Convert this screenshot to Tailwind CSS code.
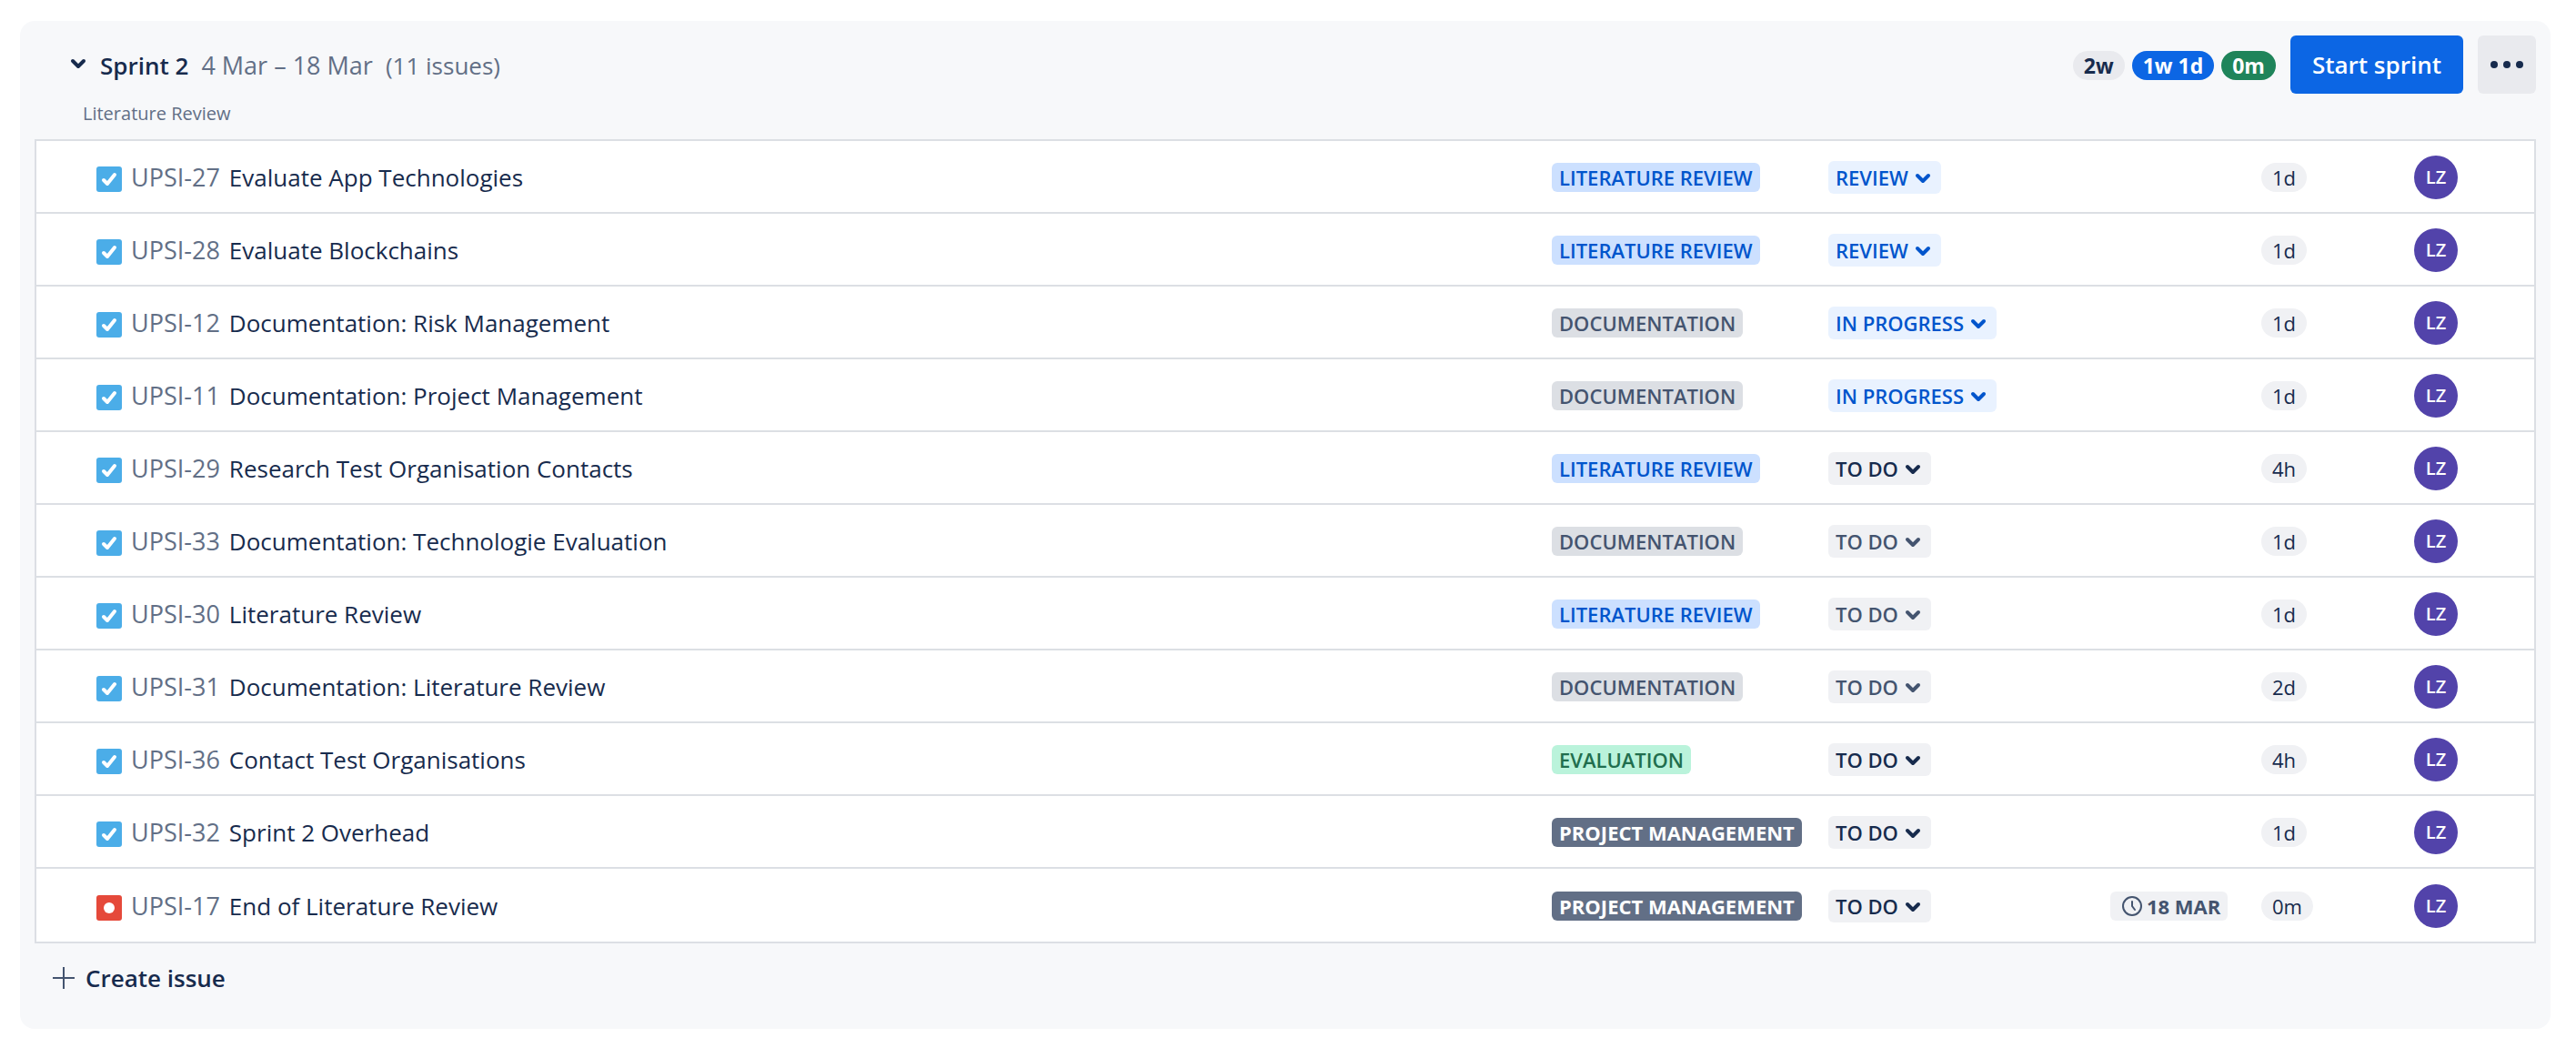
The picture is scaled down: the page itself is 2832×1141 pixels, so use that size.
<!DOCTYPE html>
<html lang="en">
<head>
<meta charset="utf-8">
<title>Backlog</title>
<script src="https://cdn.jsdelivr.net/npm/@tailwindcss/browser@4"></script>
</head>
<body class="bg-white pt-[23px] pr-7 pl-[22px] font-['Open_Sans','Noto_Sans',sans-serif] text-[26px] text-[#172b4d]">
<section class="rounded-2xl bg-[#f7f8fa] px-4 pt-4 pb-9">
  <header class="flex h-[114px] items-start">
    <div class="flex-1 pl-8">
      <div class="flex h-[66px] items-center">
        <button type="button" aria-label="Collapse sprint" class="flex size-8 items-center justify-center">
          <svg class="mb-1 size-5" viewBox="0 0 20 20" fill="none" stroke="currentColor" stroke-width="4" stroke-linecap="round" stroke-linejoin="round"><path d="M4 7l6 6 6-6"/></svg>
        </button>
        <h2 class="ml-2 font-semibold">Sprint 2</h2>
        <span class="ml-3.5 text-[27px] text-[#626f86]">4 Mar – 18 Mar</span>
        <span class="ml-3.5 text-[26px] text-[#626f86]">(11 issues)</span>
      </div>
      <p class="pl-[21px] text-[20px] leading-10 text-[#626f86]">Literature Review</p>
    </div>
    <div class="flex h-[66px] items-center gap-2 text-[23px] leading-8 font-bold">
      <span class="rounded-full bg-[#e9eaee] px-3">2w</span>
      <span class="rounded-full bg-[#0c66e4] px-3 text-white">1w 1d</span>
      <span class="rounded-full bg-[#1f845a] px-3 text-white">0m</span>
    </div>
    <button type="button" class="ml-4 h-16 rounded-md bg-[#0c66e4] px-6 font-semibold text-white">Start sprint</button>
    <button type="button" aria-label="More actions" class="ml-4 flex size-16 items-center justify-center rounded-md bg-[#e9eaee]">
      <svg class="h-3 w-9" viewBox="0 0 36 12" fill="currentColor"><circle cx="4" cy="6" r="4"/><circle cx="18" cy="6" r="4"/><circle cx="32" cy="6" r="4"/></svg>
    </button>
  </header>
  <div class="border-2 border-[#dcdfe4] bg-white">
    <table class="w-full table-fixed border-separate border-spacing-0">
      <colgroup><col><col class="w-[304px]"><col class="w-[310px]"><col class="w-[166px]"><col class="w-[168px]"><col class="w-[132px]"></colgroup>
      <tbody id="issues"></tbody>
    </table>
  </div>
  <button type="button" class="mt-4.5 ml-5 flex h-10 items-center gap-3 font-semibold">
    <svg class="size-6 text-[#44546f]" viewBox="0 0 24 24" stroke="currentColor" stroke-width="2"><path d="M12 0v24M0 12h24"/></svg>
    Create issue
  </button>
</section>
<script>
const epics = {
  'LITERATURE REVIEW': 'bg-[#cce0ff] text-[#0055cc] font-semibold',
  'DOCUMENTATION': 'bg-[#dcdfe4] text-[#44546f] font-semibold',
  'EVALUATION': 'bg-[#baf3db] text-[#216e4e] font-semibold',
  'PROJECT MANAGEMENT': 'bg-[#626f86] text-white font-bold'
};
const tones = {
  blue: 'bg-[#e9f2ff] text-[#0055cc]',
  dark: 'bg-[#f0f1f4] text-[#172b4d]',
  gray: 'bg-[#f0f1f4] text-[#44546f]'
};
const issues = [
  ['UPSI-27', 'Evaluate App Technologies', 'LITERATURE REVIEW', 'REVIEW', 'blue', '', '1d'],
  ['UPSI-28', 'Evaluate Blockchains', 'LITERATURE REVIEW', 'REVIEW', 'blue', '', '1d'],
  ['UPSI-12', 'Documentation: Risk Management', 'DOCUMENTATION', 'IN PROGRESS', 'blue', '', '1d'],
  ['UPSI-11', 'Documentation: Project Management', 'DOCUMENTATION', 'IN PROGRESS', 'blue', '', '1d'],
  ['UPSI-29', 'Research Test Organisation Contacts', 'LITERATURE REVIEW', 'TO DO', 'dark', '', '4h'],
  ['UPSI-33', 'Documentation: Technologie Evaluation', 'DOCUMENTATION', 'TO DO', 'gray', '', '1d'],
  ['UPSI-30', 'Literature Review', 'LITERATURE REVIEW', 'TO DO', 'gray', '', '1d'],
  ['UPSI-31', 'Documentation: Literature Review', 'DOCUMENTATION', 'TO DO', 'gray', '', '2d'],
  ['UPSI-36', 'Contact Test Organisations', 'EVALUATION', 'TO DO', 'dark', '', '4h'],
  ['UPSI-32', 'Sprint 2 Overhead', 'PROJECT MANAGEMENT', 'TO DO', 'dark', '', '1d'],
  ['UPSI-17', 'End of Literature Review', 'PROJECT MANAGEMENT', 'TO DO', 'dark', '18 MAR', '0m']
];
const task = '<svg class="mt-1 size-7 shrink-0" viewBox="0 0 28 28"><rect width="28" height="28" rx="3" fill="#4bade8"/><path d="M8 15l4 4L20 9" fill="none" stroke="#fff" stroke-width="4" stroke-linecap="round" stroke-linejoin="round"/></svg>';
const risk = '<svg class="mt-1 size-7 shrink-0" viewBox="0 0 28 28"><rect width="28" height="28" rx="3" fill="#e5493a"/><circle cx="14" cy="14" r="6" fill="#fff"/></svg>';
const clock = '<svg class="size-6" viewBox="0 0 24 24" fill="none" stroke="currentColor" stroke-width="2" stroke-linecap="round"><circle cx="12" cy="12" r="10"/><path d="M12 7v5l3 4"/></svg>';
const cell = 'border-b-2 border-[#dcdfe4] p-0 pt-0.5 group-last:border-b-0';
document.getElementById('issues').innerHTML = issues.map(([key, title, epic, status, tone, due, estimate]) => `
  <tr class="group">
    <td class="h-20 ${cell} pl-[66px]"><div class="flex items-center">
      ${due ? risk : task}<a href="#${key}" class="ml-2.5 text-[27px] text-[#626f86]">${key}</a><span class="ml-2.5">${title}</span></div></td>
    <td class="${cell}"><div class="flex"><span class="rounded-md px-2 text-[22px] leading-8 ${epics[epic]}">${epic}</span></div></td>
    <td class="${cell}"><div class="flex"><span class="relative rounded-md ${tones[tone]}">
      <select aria-label="Status of ${key}" class="block h-9 appearance-none pr-9 pl-2 text-[22px] font-semibold [field-sizing:content]"><option>${status}</option></select>
      <svg class="pointer-events-none absolute top-2 right-2.5 size-5" viewBox="0 0 20 20" fill="none" stroke="currentColor" stroke-width="4" stroke-linecap="round" stroke-linejoin="round"><path d="M4 8l6 6 6-6"/></svg></span></div></td>
    <td class="${cell}">${due ? `<div class="flex"><span class="flex items-center gap-1 rounded-md bg-[#f0f1f4] pr-2 pl-3 text-[22px] leading-8 font-bold text-[#44546f]">${clock}${due}</span></div>` : ''}</td>
    <td class="${cell}"><div class="flex"><span class="rounded-full bg-[#f0f1f4] px-3 text-[22px] leading-8">${estimate}</span></div></td>
    <td class="${cell}"><span class="flex size-12 items-center justify-center rounded-full bg-[#5243aa] text-[20px] font-semibold text-white">LZ</span></td>
  </tr>`).join('');
</script>
</body>
</html>
